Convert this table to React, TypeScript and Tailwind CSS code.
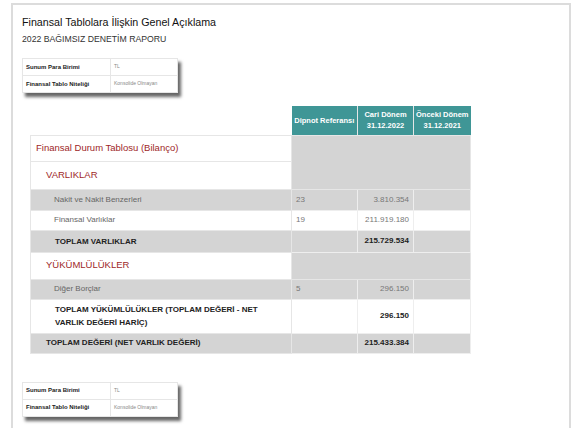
import React from "react";

type Row = {
  label: string;
  kind: "title" | "section" | "item" | "total" | "grand";
  h: number;
  note?: string;
  cur?: string;
  gray?: boolean;
  span?: number;
};

const rows: Row[] = [
  { label: "Finansal Durum Tablosu (Bilanço)", kind: "title", h: 26, span: 2 },
  { label: "VARLIKLAR", kind: "section", h: 28 },
  { label: "Nakit ve Nakit Benzerleri", kind: "item", h: 21, note: "23", cur: "3.810.354", gray: true },
  { label: "Finansal Varlıklar", kind: "item", h: 20, note: "19", cur: "211.919.180" },
  { label: "TOPLAM VARLIKLAR", kind: "total", h: 22, cur: "215.729.534", gray: true },
  { label: "YÜKÜMLÜLÜKLER", kind: "section", h: 27, span: 1 },
  { label: "Diğer Borçlar", kind: "item", h: 20, note: "5", cur: "296.150", gray: true },
  { label: "TOPLAM YÜKÜMLÜLÜKLER (TOPLAM DEĞERİ - NET VARLIK DEĞERİ HARİÇ)", kind: "total", h: 34, cur: "296.150" },
  { label: "TOPLAM DEĞERİ (NET VARLIK DEĞERİ)", kind: "grand", h: 20, cur: "215.433.384", gray: true },
];

function InfoBox() {
  return (
    <table className="w-[156px] table-fixed border-collapse bg-white shadow-[3px_4px_3px_rgba(0,0,0,0.6)]">
      <tbody>
        <tr className="h-[17px]">
          <td className="w-[88px] border border-[#e6e6e6] pl-[3px] text-[6px] font-bold text-[#222]">Sunum Para Birimi</td>
          <td className="border border-[#e6e6e6] pl-[3px] text-[5px] text-[#888]">TL</td>
        </tr>
        <tr className="h-[17px]">
          <td className="border border-[#e6e6e6] pl-[3px] text-[6px] font-bold text-[#222]">Finansal Tablo Niteliği</td>
          <td className="border border-[#e6e6e6] pl-[3px] text-[5px] text-[#888]">Konsolide Olmayan</td>
        </tr>
      </tbody>
    </table>
  );
}

function labelClass(r: Row) {
  if (r.kind === "title") return "pl-[5px] text-[9.5px] text-[#9e1f28]";
  if (r.kind === "section") return "pl-[15px] text-[9.5px] text-[#9e1f28]";
  if (r.kind === "item") return "pl-[23px] text-[8px] text-[#666]";
  if (r.kind === "total") return "pl-[24px] pr-[6px] text-[8px] font-bold leading-[13px] text-[#222]";
  return "pl-[15px] text-[8px] font-bold text-[#222]";
}

export default function App() {
  return (
    <div className="min-h-[428px] bg-white font-['Liberation_Sans',Arial,sans-serif]">
      <div className="ml-[11px] mt-[3px] h-[425px] w-[560px] overflow-hidden border-2 border-b-0 border-[#dcdcdc] pl-[9px] pt-[11px]">
        <div className="text-[10.7px] leading-[13px] text-[#111]">Finansal Tablolara İlişkin Genel Açıklama</div>
        <div className="mt-[5px] text-[8.7px] leading-[10px] text-[#333]">2022 BAĞIMSIZ DENETİM RAPORU</div>

        <div className="mt-[14px]">
          <InfoBox />
        </div>

        <table className="ml-[8px] mt-[13px] w-[440px] table-fixed border-collapse">
          <colgroup>
            <col className="w-[261px]" />
            <col className="w-[66px]" />
            <col className="w-[56px]" />
            <col className="w-[57px]" />
          </colgroup>
          <thead>
            <tr className="h-[29px]">
              <th></th>
              <th className="border-r border-[#e6e6e6] bg-[#3f9696] text-[7.5px] font-bold text-white">Dipnot Referansı</th>
              <th className="border-r border-[#e6e6e6] bg-[#3f9696] text-[7.5px] font-bold leading-[11px] text-white">
                Cari Dönem
                <br />
                31.12.2022
              </th>
              <th className="bg-[#3f9696] text-[7.5px] font-bold leading-[11px] text-white">
                Önceki Dönem
                <br />
                31.12.2021
              </th>
            </tr>
          </thead>
          <tbody>
            {rows.map((r, i) => (
              <tr key={i} style={{ height: r.h }} className={r.gray ? "bg-[#d4d4d4]" : "bg-white"}>
                <td className={`border border-[#e6e6e6] ${labelClass(r)}`}>{r.label}</td>
                {r.span !== undefined ? (
                  <td colSpan={3} rowSpan={r.span} className="border border-[#e6e6e6] bg-[#d4d4d4]"></td>
                ) : r.kind === "section" ? null : (
                  <>
                    <td className="border border-[#eeeeee] pl-[4px] text-[8px] text-[#777]">{r.note}</td>
                    <td
                      className={`border border-[#eeeeee] pr-[4px] text-right text-[8px] ${
                        r.kind === "item" ? "text-[#777]" : "font-bold text-[#222]"
                      }`}
                    >
                      {r.cur}
                    </td>
                    <td className="border border-[#eeeeee]"></td>
                  </>
                )}
              </tr>
            ))}
          </tbody>
        </table>

        <div className="mt-[28px]">
          <InfoBox />
        </div>

        <div className="ml-[270px] mt-[12px] h-[3px] w-[200px] bg-[#3f9696]"></div>
      </div>
    </div>
  );
}
